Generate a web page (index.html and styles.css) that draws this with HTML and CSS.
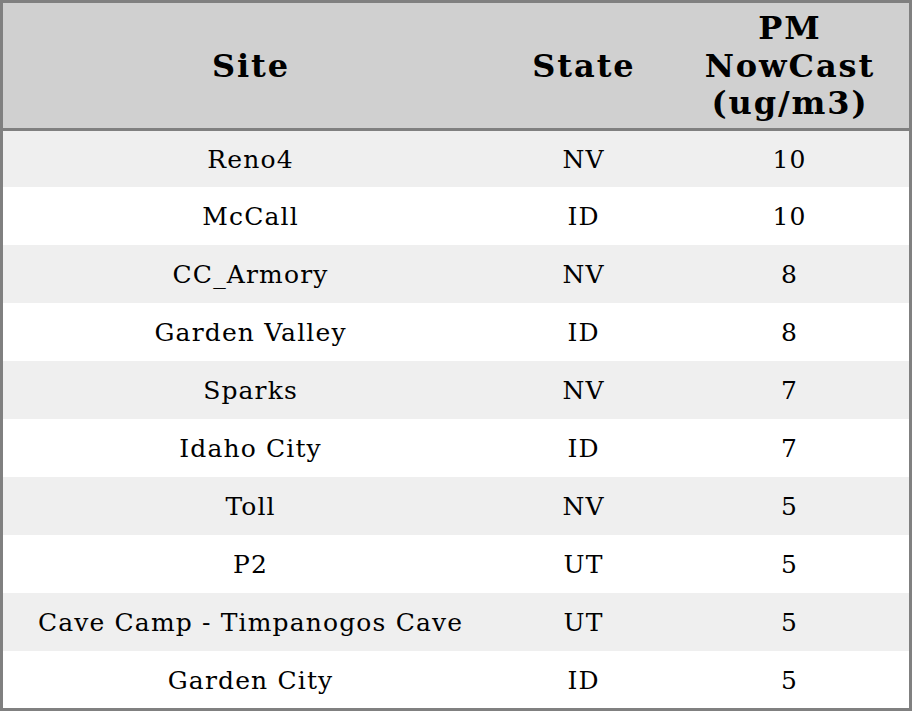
FILE: index.html
```html
<!DOCTYPE html>
<html>
<head>
<meta charset="utf-8">
<link rel="stylesheet" href="styles.css">
</head>
<body>
<table class="aq-table">
  <colgroup>
    <col class="col-site">
    <col class="col-state">
    <col class="col-pm">
  </colgroup>
  <thead>
    <tr><th>Site</th><th>State</th><th>PM<br>NowCast<br>(ug/m3)</th></tr>
  </thead>
  <tbody>
    <tr><td>Reno4</td><td>NV</td><td>10</td></tr>
    <tr><td>McCall</td><td>ID</td><td>10</td></tr>
    <tr><td>CC_Armory</td><td>NV</td><td>8</td></tr>
    <tr><td>Garden Valley</td><td>ID</td><td>8</td></tr>
    <tr><td>Sparks</td><td>NV</td><td>7</td></tr>
    <tr><td>Idaho City</td><td>ID</td><td>7</td></tr>
    <tr><td>Toll</td><td>NV</td><td>5</td></tr>
    <tr><td>P2</td><td>UT</td><td>5</td></tr>
    <tr><td>Cave Camp - Timpanogos Cave</td><td>UT</td><td>5</td></tr>
    <tr><td>Garden City</td><td>ID</td><td>5</td></tr>
  </tbody>
</table>
</body>
</html>
```

FILE: styles.css
```css
html, body {
  margin: 0;
  padding: 0;
  background: #ffffff;
}

.aq-table {
  width: 912px;
  border-collapse: separate;
  border-spacing: 0;
  border: 3px solid #808080;
  table-layout: fixed;
  font-family: "DejaVu Serif", serif;
  color: #000;
}

.col-site { width: 494px; }
.col-state { width: 172px; }
.col-pm { width: 240px; }

.aq-table th {
  background: #d0d0d0;
  font-size: 32px;
  font-weight: bold;
  line-height: 37.5px;
  letter-spacing: 1.9px;
  padding: 2px 0 0 1.9px;
  height: 128px;
  box-sizing: border-box;
  border-bottom: 3px solid #808080;
  text-align: center;
  vertical-align: middle;
}

.aq-table td {
  font-size: 25px;
  letter-spacing: 1.15px;
  text-align: center;
  vertical-align: middle;
  padding: 1px 0 0 1.15px;
  height: 58px;
  box-sizing: border-box;
}

.aq-table tbody tr:nth-child(odd) td { background: #efefef; }
.aq-table tbody tr:first-child td { height: 56px; }
.aq-table tbody tr:last-child td { height: 57px; }
```
